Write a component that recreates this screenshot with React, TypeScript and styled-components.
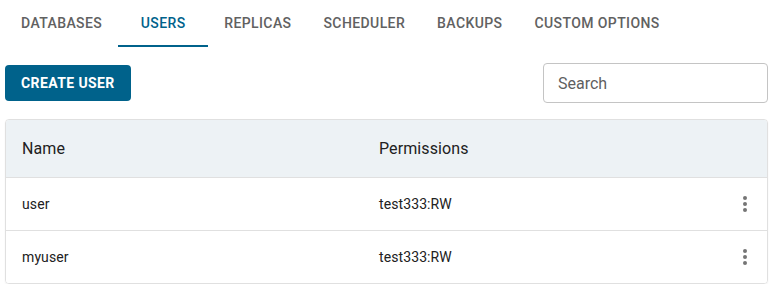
import styled, { createGlobalStyle } from "styled-components";

const GlobalStyle = createGlobalStyle`
  body {
    margin: 0;
    background: #ffffff;
    font-family: Roboto, "Liberation Sans", Arial, sans-serif;
  }
`;

const Page = styled.div`
  padding: 0 4px 0 5px;
`;

const TabBar = styled.nav`
  display: flex;
  height: 47px;
`;

const Tab = styled.div<{ $active?: boolean }>`
  display: flex;
  align-items: center;
  justify-content: center;
  min-width: 90px;
  padding: 0 16px;
  box-sizing: border-box;
  font-size: 14px;
  font-weight: 500;
  letter-spacing: 0.4px;
  text-transform: uppercase;
  color: ${(p) => (p.$active ? "#00628b" : "#616161")};
  border-bottom: 2px solid ${(p) => (p.$active ? "#00628b" : "transparent")};
  padding-top: 1px;
  cursor: pointer;
`;

const Toolbar = styled.div`
  display: flex;
  align-items: center;
  justify-content: space-between;
  height: 40px;
  margin-top: 16px;
`;

const PrimaryButton = styled.button`
  height: 36px;
  padding: 0 16px;
  border: none;
  border-radius: 4px;
  background: #00628b;
  color: #ffffff;
  font-family: inherit;
  font-size: 14px;
  font-weight: 700;
  letter-spacing: 0.4px;
  text-transform: uppercase;
  cursor: pointer;
`;

const SearchInput = styled.input`
  width: 225px;
  height: 40px;
  box-sizing: border-box;
  padding: 0 14px;
  border: 1px solid #c4c4c4;
  border-radius: 4px;
  font-family: inherit;
  font-size: 16px;
  color: #212121;
  outline: none;
  &::placeholder {
    color: #5f5f5f;
    opacity: 1;
  }
`;

const Table = styled.div`
  margin-top: 16px;
  border: 1px solid #e0e0e0;
  border-radius: 4px;
  overflow: hidden;
  box-shadow: 0 1px 2px rgba(0, 0, 0, 0.06);
`;

const Row = styled.div<{ $head?: boolean }>`
  display: grid;
  grid-template-columns: 357px 1fr 48px;
  align-items: center;
  height: ${(p) => (p.$head ? "57px" : "52px")};
  background: ${(p) => (p.$head ? "#edf2f5" : "#ffffff")};
  font-size: ${(p) => (p.$head ? "16px" : "14px")};
  letter-spacing: 0.1px;
  color: #212121;
  & + & {
    border-top: 1px solid #e0e0e0;
  }
`;

const Cell = styled.div`
  padding-left: 16px;
`;

const ActionCell = styled.div`
  display: flex;
  justify-content: flex-end;
  padding-right: 10px;
`;

const KebabIcon = () => (
  <svg width="24" height="24" viewBox="0 0 24 24" fill="#757575">
    <circle cx="12" cy="6" r="2" />
    <circle cx="12" cy="12" r="2" />
    <circle cx="12" cy="18" r="2" />
  </svg>
);

const tabs = ["Databases", "Users", "Replicas", "Scheduler", "Backups", "Custom Options"];

const users = [
  { name: "user", permissions: "test333:RW" },
  { name: "myuser", permissions: "test333:RW" },
];

const App = () => {
  return (
    <Page>
      <GlobalStyle />
      <TabBar>
        {tabs.map((t) => (
          <Tab key={t} $active={t === "Users"}>
            {t}
          </Tab>
        ))}
      </TabBar>
      <Toolbar>
        <PrimaryButton>Create user</PrimaryButton>
        <SearchInput placeholder="Search" />
      </Toolbar>
      <Table>
        <Row $head>
          <Cell>Name</Cell>
          <Cell>Permissions</Cell>
          <div />
        </Row>
        {users.map((u) => (
          <Row key={u.name}>
            <Cell>{u.name}</Cell>
            <Cell>{u.permissions}</Cell>
            <ActionCell>
              <KebabIcon />
            </ActionCell>
          </Row>
        ))}
      </Table>
    </Page>
  );
};

export default App;
